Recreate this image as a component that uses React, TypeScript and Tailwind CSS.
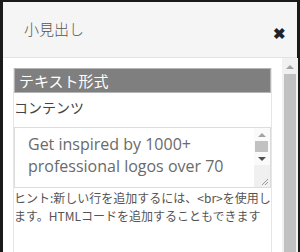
export default function App() {
  return (
    <div className="w-[300px] h-[252px] overflow-hidden bg-[#1a1a1a] pl-[3px] pr-[3px] pt-[2px]">
      <div className="flex flex-col h-full bg-white font-['Noto_Sans_CJK_JP',sans-serif]">
        <div className="h-[56px] shrink-0 flex items-start justify-between bg-[#f5f5f5] border-b border-[#e3e3e3] pl-[21px] pr-[11px]">
          <h2 className="mt-[17px] text-[15px] leading-[20px] text-[#555] font-light">小見出し</h2>
          <span className="mt-[21px] text-[15px] leading-[20px] font-bold text-[#222]">✖</span>
        </div>
        <div className="flex flex-1 min-h-0">
          <div className="flex-1 pl-[10px] pr-[10px] pt-[10px]">
            <div className="h-full border-x border-[#e6e6e6]">
              <div className="h-[25px] bg-[#7f7f7f] border border-[#b5b5b5] text-white text-[15px] leading-[23px] pl-[4px]">テキスト形式</div>
              <div className="text-[14px] leading-[20px] text-[#444] mt-[4px]">コンテンツ</div>
              <div className="mt-[10px] h-[61px] flex border border-[#dcdcdc] bg-white">
                <div className="flex-1 pl-[13px] pt-[5px] font-['Open_Sans',sans-serif] text-[16px] leading-[22px] text-[#6a6a6a] overflow-hidden">
                  Get inspired by 1000+ professional logos over 70
                </div>
                <div className="w-[16px] flex flex-col items-center bg-[#fafafa]">
                  <span className="mt-[5px] w-0 h-0 border-x-[4px] border-x-transparent border-b-[4px] border-b-[#a3a3a3]"></span>
                  <span className="mt-[4px] w-[13px] h-[11px] bg-[#c1c1c1]"></span>
                  <span className="mt-[5px] w-0 h-0 border-x-[4px] border-x-transparent border-t-[4px] border-t-[#505050]"></span>
                  <div className="mt-[4px] w-[16px] flex-1 bg-[#f0f0f0] relative">
                    <svg className="absolute right-[1px] bottom-[1px]" width="10" height="10" viewBox="0 0 10 10">
                      <path d="M9 3 L3 9 M9 6 L6 9" stroke="#999" strokeWidth="1" />
                    </svg>
                  </div>
                </div>
              </div>
              <div className="mt-[1px] text-[12px] leading-[18px] text-[#555] whitespace-nowrap overflow-hidden">
                <div>ヒント:新しい行を追加するには、&lt;br&gt;を使用し</div>
                <div>ます。HTMLコードを追加することもできます</div>
              </div>
            </div>
          </div>
          <div className="w-[16px] shrink-0 flex flex-col items-center bg-[#f1f1f1]">
            <span className="mt-[7px] w-0 h-0 border-x-[4px] border-x-transparent border-b-[4px] border-b-[#a3a3a3]"></span>
            <span className="mt-[5px] w-[12px] flex-1 bg-[#c1c1c1]"></span>
          </div>
        </div>
      </div>
    </div>
  );
}
